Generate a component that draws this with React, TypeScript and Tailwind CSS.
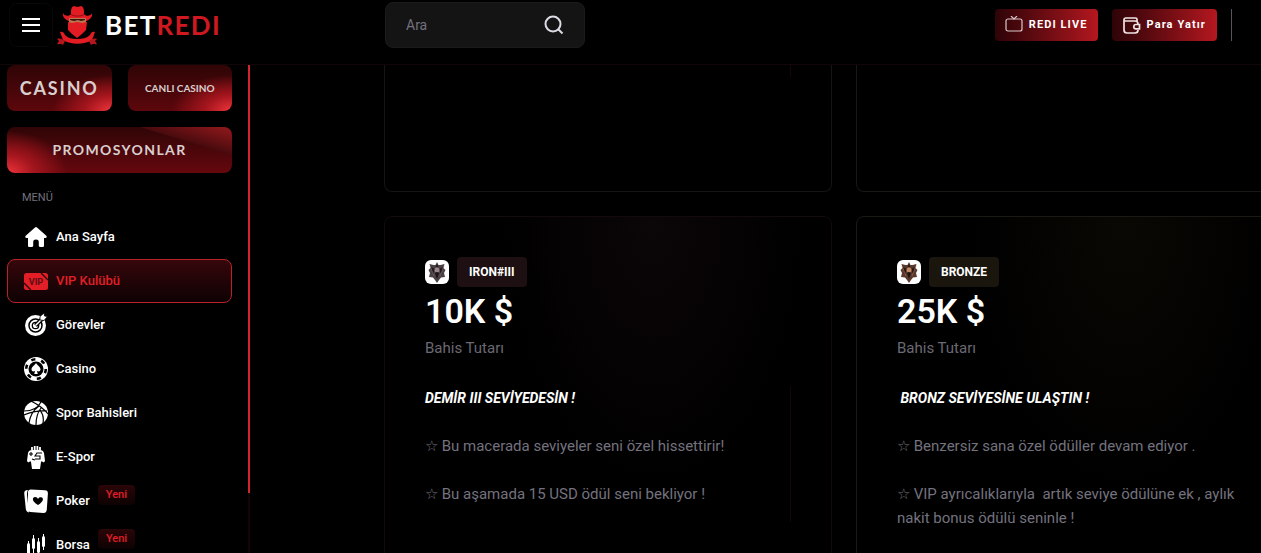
import type { ReactNode } from "react";

interface IMenuItem {
    icon: ReactNode;
    label: string;
    active?: boolean;
    isNew?: boolean;
}

interface ILevelCard {
    name: string;
    amount: string;
    title: string;
    notes: string[];
    tone: "iron" | "bronze";
}

function CowboyLogo() {
    return (
        <svg className="h-10 w-10" viewBox="0 0 40 40" aria-hidden="true">
            <path d="M6 8c1 3 6 4 8 1 0-4 0-7 3-8 1 0 2 1 3.500 1S23 1 24 1c3 1 3 4 3 8 2 3 7 2 8-1 1 5-4 8-9 9H15C10 16 5 13 6 8z" fill="#e31b23" />
            <path d="M14 9c4 2 9 2 13 0v1c-4 2-9 2-13 0z" fill="#8d1116" />
            <path d="M12 13h17v5H12z" fill="#b9764e" />
            <path d="M13 14h15v1l-4 1-3-1-4 1-4-1z" fill="#3a120c" />
            <path d="M11 17l4 1 5-1 5 1 5-1-1 8-4 4-5 4-5-4-4-4z" fill="#e31b23" />
            <path d="M3 27c2-1 4 0 5 3 3 3 7 4 12 4s10-1 13-4c1-3 3-4 5-3l-3 8c-8 5-21 5-29 0z" fill="#e31b23" />
            <path d="M0 34c3-1 5 0 8 2l-2 4c-2-2-4 0-6-1l2-3zM40 34c-3-1-5 0-8 2l2 4c2-2 4 0 6-1l-2-3z" fill="#b3161c" />
        </svg>
    );
}

function HomeIcon() {
    return (
        <svg className="h-6 w-6" viewBox="0 0 24 24" fill="currentColor">
            <path d="M11 2.500q1-.8 2 0l9.300 8.300c.9.900.3 2.200-.8 2.200H20v7.500c0 1-.6 1.500-1.500 1.500H16c-.8 0-1.200-.5-1.200-1.200V17c0-1.700-1-2.500-2.800-2.500S9.200 15.300 9.200 17v3.800c0 .7-.4 1.200-1.200 1.200H5.500C4.600 22 4 21.500 4 20.500V13H2.500c-1.100 0-1.700-1.300-.8-2.200z" />
        </svg>
    );
}

function VipIcon() {
    return (
        <svg className="h-6 w-6" viewBox="0 0 24 24">
            <rect y="4" width="24" height="17" rx="2.500" fill="#e31e26" />
            <path d="M17 4l7 7M0 14l7 7" stroke="#26070a" strokeWidth="1.300" />
            <text x="12" y="15.500" textAnchor="middle" fontSize="9" fontWeight="700" fill="#5f0c12">
                VIP
            </text>
        </svg>
    );
}

function TargetIcon() {
    return (
        <svg className="h-6 w-6" viewBox="0 0 24 24" fill="none">
            <circle cx="11.500" cy="12.500" r="10.500" fill="#fff" />
            <circle cx="11.500" cy="12.500" r="6.500" stroke="#000" strokeWidth="1.500" />
            <circle cx="11.500" cy="12.500" r="3.200" stroke="#000" strokeWidth="1.300" />
            <path d="M11.500 12.500L19 5" stroke="#000" strokeWidth="4" />
            <path d="M11.500 12.500L18 6" stroke="#fff" strokeWidth="1.500" />
            <path d="M16 7V3.500L20 0l.5 3 3 .5L20 7.500z" fill="#fff" stroke="#000" strokeWidth=".8" />
        </svg>
    );
}

function ChipIcon() {
    return (
        <svg className="h-6 w-6" viewBox="0 0 24 24" fill="none">
            <circle cx="12" cy="12" r="12" fill="#fff" />
            <circle cx="12" cy="12" r="9.800" stroke="#000" strokeWidth="2.600" strokeDasharray="4.200 6.060" />
            <circle cx="12" cy="12" r="7.500" fill="#000" />
            <path d="M12 6c1 2 4.500 3.800 4.500 6.300 0 2.200-2.500 2.900-3.700 1.500l1 3.200h-3.600l1-3.200c-1.200 1.400-3.700.7-3.700-1.500C7.500 9.800 11 8 12 6z" fill="#fff" />
        </svg>
    );
}

function BasketballIcon() {
    return (
        <svg className="h-6 w-6" viewBox="0 0 24 24" fill="none">
            <circle cx="12" cy="12" r="12" fill="#fff" />
            <path d="M0 10c8 0 14-3 17-9M7 0c8 4 13 8 17 13M5 22C6 15 8 10 15 5M12 24c0-7 1-12 5-17M0 14c7-3 13-5 23-4M19 22c1-5 0-9-3-13" stroke="#000" strokeWidth="1.200" />
        </svg>
    );
}

function FistIcon() {
    return (
        <svg className="h-6 w-6" viewBox="0 0 24 24" fill="none">
            <path d="M3 16l1-8c.5-2 2-3 4-3h8c2 0 3.500 1 4 3l1 8c-1 2-2.500 1.500-3 0l-1 1-1 7H8l-1-7-1-1c-.5 1.500-2 2-3 0z" fill="#fff" />
            <path d="M8 5V2M10.700 5V1M13.400 5V1M16 5V2" stroke="#fff" strokeWidth="1.800" />
            <path d="M7 7v4M5 9h4M18 8h-5l-2 3h5v3h-5M8 14l3 1" stroke="#000" strokeWidth="1.100" />
        </svg>
    );
}

function CardsIcon() {
    return (
        <svg className="h-6 w-6" viewBox="0 0 24 24">
            <path d="M4 1C1 1 0 2.500.3 5l1.500 15c.3 2 1.200 3 3.200 3.500L3 6c0-2.500.3-4 1-5z" fill="#fff" />
            <path d="M7 .4l14 .8c2 .1 3 1.300 2.900 3.200l-1.100 16c-.2 2.500-1.400 3.600-3.500 3.500L6.500 23c-1.500 0-2.500-1-2.600-2.700L4 3.500C4 1.500 5 .3 7 .4z" fill="#fff" />
            <path d="M14 16c-7-4-5.500-8-3-8 1.500 0 2.500.7 3 2 .6-1.300 1.600-1.900 3-1.700 3 .5 3 4.200-3 7.700z" fill="#000" />
        </svg>
    );
}

function CandlesIcon() {
    return (
        <svg className="h-6 w-6" viewBox="0 0 24 24" fill="#fff">
            <rect x="3" y="10" width="3" height="12" rx="1.500" />
            <rect x="8" y="5" width="3" height="11" rx="1.500" />
            <rect x="13" y="8" width="3" height="12" rx="1.500" />
            <rect x="18" y="3" width="3" height="11" rx="1.500" />
            <path d="M4 8h1v16H4zM9 2h1v18H9zM14 5h1v18h-1zM19 1h1v16h-1z" />
        </svg>
    );
}

function Crest({ tone }: { tone: "iron" | "bronze" }) {
    const dark = tone === "iron" ? "#4a4145" : "#5b3a2c";
    const light = tone === "iron" ? "#97878a" : "#c98a66";
    return (
        <svg className="h-6 w-6 rounded-md bg-white" viewBox="0 0 24 24" aria-hidden="true">
            <path d="M12 2l1.500 3 2 0 4-1-1 4 2 2-1.500 3 1 4-4 .500-2 2.500-2 3-2-3-2-2.500-4-.500 1-4L3.500 10l2-2-1-4 4 1h2z" fill={dark} />
            <path d="M6 7l4 2-2 5zM18 7l-4 2 2 5zM12 4l1.500 3h-3z" fill="#241a1b" />
            <circle cx="12" cy="10" r="2.500" fill={light} />
            <path d="M10 13l2-1 2 1-2 6z" fill="#1c1213" />
            <path d="M5 6l2 5 2 5M19 6l-2 5-2 5" fill="none" stroke={light} strokeWidth=".4" />
        </svg>
    );
}

function MenuItem({ icon, label, active, isNew }: IMenuItem) {
    return (
        <li>
            <a
                href="#"
                className={
                    active
                        ? "flex h-11 items-center gap-2 rounded-lg border border-[#b8232b] bg-linear-to-b from-[#36070b] to-[#0f0204] px-4 text-[13px] font-medium text-[#e31e26]"
                        : "flex h-11 items-center gap-2 border border-transparent px-4 text-[13px] font-medium text-white"
                }
            >
                {icon}
                <span>{label}</span>
                {isNew && (
                    <span className="mb-3 rounded bg-linear-to-b from-[#2b0608] to-[#0d0203] px-2 text-[11px] leading-5 text-[#e31e26]">
                        Yeni
                    </span>
                )}
            </a>
        </li>
    );
}

function LevelCard({ name, amount, title, notes, tone }: ILevelCard) {
    const iron = tone === "iron";
    return (
        <section
            className={
                iron
                    ? "h-[480px] w-[448px] shrink-0 rounded-lg border border-[#120a0c] bg-[radial-gradient(ellipse_at_60%_0%,#0b0607_0%,#060304_20%,#000_40%)] p-10"
                    : "h-[480px] w-[448px] shrink-0 rounded-lg border border-[#1a1913] bg-[radial-gradient(ellipse_at_60%_0%,#090803_0%,#050402_20%,#000_40%)] p-10"
            }
        >
            <div className="flex items-center gap-2">
                <Crest tone={tone} />
                <h2
                    className={
                        iron
                            ? "rounded bg-[#1e0f12] px-3 text-xs leading-[30px] font-bold"
                            : "rounded bg-[#1a160d] px-3 text-xs leading-[30px] font-bold"
                    }
                >
                    {name}
                </h2>
            </div>
            <p className="text-[34px] leading-[49px] font-semibold">{amount}</p>
            <p className="text-[15px] leading-6 text-[#6b6974]">Bahis Tutarı</p>
            <div
                className={
                    iron
                        ? "mt-[26px] flex h-[136px] flex-col gap-6 border-r border-[#180507] text-[15px] leading-6 text-[#74727e]"
                        : "mt-[26px] flex flex-col gap-6 text-[15px] leading-6 text-[#74727e]"
                }
            >
                <h3 className="text-sm leading-6 font-bold whitespace-pre text-white italic">{title}</h3>
                {notes.map((note) => (
                    <p key={note} className="whitespace-pre-wrap">
                        {`☆ ${note}`}
                    </p>
                ))}
            </div>
        </section>
    );
}

const menu: IMenuItem[] = [
    { icon: <HomeIcon />, label: "Ana Sayfa" },
    { icon: <VipIcon />, label: "VIP Kulübü", active: true },
    { icon: <TargetIcon />, label: "Görevler" },
    { icon: <ChipIcon />, label: "Casino" },
    { icon: <BasketballIcon />, label: "Spor Bahisleri" },
    { icon: <FistIcon />, label: "E-Spor" },
    { icon: <CardsIcon />, label: "Poker", isNew: true },
    { icon: <CandlesIcon />, label: "Borsa", isNew: true },
];

const levels: ILevelCard[] = [
    {
        name: "IRON#III",
        amount: "10K $",
        title: "DEMİR III SEVİYEDESİN !",
        notes: ["Bu macerada seviyeler seni özel hissettirir!", "Bu aşamada 15 USD ödül seni bekliyor !"],
        tone: "iron",
    },
    {
        name: "BRONZE",
        amount: "25K $",
        title: " BRONZ SEVİYESİNE ULAŞTIN !",
        notes: [
            "Benzersiz sana özel ödüller devam ediyor .",
            "VIP ayrıcalıklarıyla  artık seviye ödülüne ek , aylık nakit bonus ödülü seninle !",
        ],
        tone: "bronze",
    },
];

function Header() {
    return (
        <header className="flex h-[65px] shrink-0 items-start border-b border-[#120608]">
            <div className="flex w-[385px] shrink-0 items-center pt-[3px] pl-[9px]">
                <button aria-label="Menü" className="flex h-11 w-11 items-center justify-center rounded-lg border border-[#080808]">
                    <svg className="h-5 w-5" viewBox="0 0 20 20" stroke="#fff" strokeWidth="2">
                        <path d="M1 4h18M1 10h18M1 16h18" />
                    </svg>
                </button>
                <a href="#" className="ml-1 flex items-center gap-2 font-[Lato,sans-serif] text-[26px] leading-10 font-bold">
                    <CowboyLogo />
                    <span className="tracking-wider">
                        BET<span className="text-[#cf1820]">REDI</span>
                    </span>
                </a>
            </div>
            <label className="mt-[2px] flex h-[46px] w-[200px] items-center rounded-lg border border-[#1b1b1b] bg-[#141414] px-5">
                <input
                    type="text"
                    aria-label="Ara"
                    placeholder="Ara"
                    className="w-full min-w-0 bg-transparent text-sm text-white outline-none placeholder:text-[#73717e]"
                />
                <svg className="h-5 w-5 shrink-0" viewBox="0 0 20 20" fill="none" stroke="#dcdce6" strokeWidth="2">
                    <circle cx="9" cy="9" r="7.500" />
                    <path d="M14.500 14.500l4 4" />
                </svg>
            </label>
            <div className="mr-[29px] ml-auto flex gap-[14px] pt-[9px] text-[11px] font-bold text-white">
                <button className="flex h-8 items-center gap-[6px] rounded bg-linear-to-r from-[#2e0407] to-[#b5171f] px-[10px]">
                    <svg className="h-[18px] w-[18px]" viewBox="0 0 18 18" fill="none" stroke="#d9c8c9" strokeWidth="1.200">
                        <rect x="1" y="3" width="16" height="12" rx="2" />
                        <path d="M6 0l3 3 3-3" />
                    </svg>
                    <span className="tracking-widest">REDI LIVE</span>
                </button>
                <button className="flex h-8 items-center gap-[6px] rounded bg-linear-to-r from-[#2e0407] to-[#b5171f] px-[11px]">
                    <svg className="h-[18px] w-[18px]" viewBox="0 0 18 18" fill="none" stroke="#efe4e4" strokeWidth="1.700">
                        <path d="M14 5V3.500Q14 2 12.500 2H3Q1 2 1 4v10q0 3 3 3h8q3 0 3-3M1 5h11q3 0 3 3M16.500 8.500H13a2.200 2.200 0 000 4.400h3.500z" />
                    </svg>
                    <span className="tracking-widest">Para Yatır</span>
                </button>
                <span className="h-8 w-px bg-[#55555a]" />
            </div>
        </header>
    );
}

function Sidebar() {
    return (
        <aside className="flex w-[250px] shrink-0 justify-between overflow-hidden">
            <div className="w-[232px] pl-[7px]">
                <div className="grid grid-cols-2 gap-4 font-[Lato,sans-serif] font-bold text-[#d9cfcf]">
                    <a
                        href="#"
                        className="flex h-[46px] items-center justify-center rounded-lg bg-[radial-gradient(ellipse_60px_36px_at_100%_100%,#f0343c_0%,#a3151d_45%,transparent_100%),linear-gradient(to_bottom,#2f0506,#5c070c)] text-lg tracking-widest"
                    >
                        CASINO
                    </a>
                    <a
                        href="#"
                        className="flex h-[46px] items-center justify-center rounded-lg bg-[radial-gradient(ellipse_60px_36px_at_100%_100%,#f0343c_0%,#a3151d_45%,transparent_100%),linear-gradient(to_bottom,#2f0506,#5c070c)] text-[10px]"
                    >
                        CANLI CASINO
                    </a>
                    <a
                        href="#"
                        className="col-span-2 flex h-[46px] items-center justify-center rounded-lg bg-[radial-gradient(ellipse_60px_42px_at_0%_100%,#ee333b_0%,#a3151d_45%,transparent_100%),linear-gradient(197deg,#94191d_0%,#4a0b0e_24%,transparent_25%),linear-gradient(to_bottom,#300506,#65080e)] text-sm tracking-widest"
                    >
                        PROMOSYONLAR
                    </a>
                </div>
                <h2 className="mt-[15px] mb-2 pl-[15px] text-[11px] leading-[19px] text-[#73717e]">MENÜ</h2>
                <ul>
                    {menu.map((item) => (
                        <MenuItem key={item.label} {...item} />
                    ))}
                </ul>
            </div>
            <div className="w-[2px] bg-[#150406]">
                <div className="h-[428px] bg-[#d3252d]" />
            </div>
        </aside>
    );
}

function App() {
    return (
        <div className="flex h-screen flex-col overflow-hidden bg-black font-[Roboto,sans-serif] text-white">
            <Header />
            <div className="flex min-h-0 grow">
                <Sidebar />
                <main className="flex min-w-0 grow flex-col gap-6 overflow-hidden pl-[134px]">
                    <div className="flex gap-6">
                        <div className="h-[127px] w-[448px] shrink-0 rounded-b-lg border border-t-0 border-[#151515] px-10">
                            <div className="h-3 border-r border-[#180507]" />
                        </div>
                        <div className="h-[127px] w-[448px] shrink-0 rounded-b-lg border border-t-0 border-[#171713]" />
                    </div>
                    <div className="flex gap-6">
                        {levels.map((level) => (
                            <LevelCard key={level.name} {...level} />
                        ))}
                    </div>
                </main>
            </div>
        </div>
    );
}

export default App;
